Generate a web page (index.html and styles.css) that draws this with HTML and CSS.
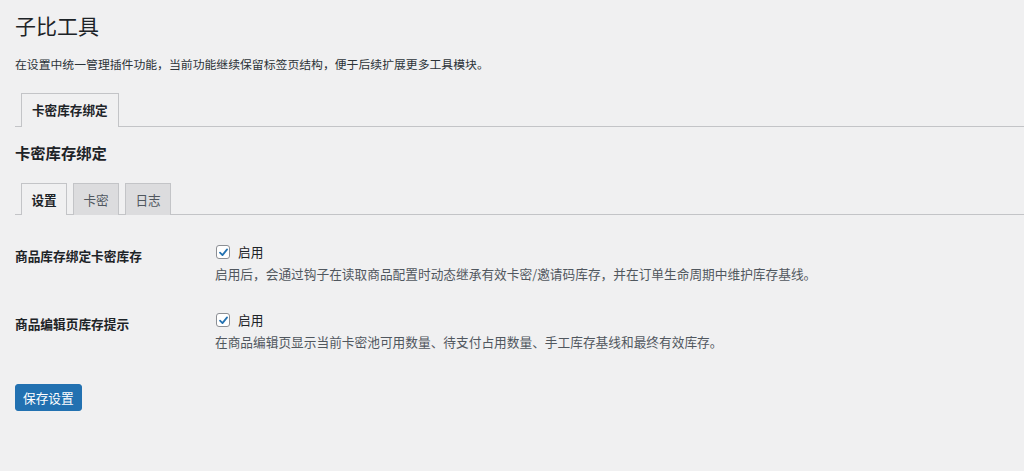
FILE: index.html
```html
<!DOCTYPE html>
<html lang="zh-CN">
<head>
<meta charset="utf-8">
<title>子比工具</title>
<link rel="stylesheet" href="styles.css">
</head>
<body>
<div class="wrap">
  <h1 class="page-title">子比工具</h1>
  <p class="page-desc">在设置中统一管理插件功能，当前功能继续保留标签页结构，便于后续扩展更多工具模块。</p>

  <nav class="nav-tabs">
    <a class="nav-tab nav-tab-active">卡密库存绑定</a>
  </nav>

  <h2 class="section-title">卡密库存绑定</h2>

  <nav class="nav-tabs sub-tabs">
    <a class="nav-tab nav-tab-active">设置</a>
    <a class="nav-tab">卡密</a>
    <a class="nav-tab">日志</a>
  </nav>

  <div class="form-table">
    <div class="form-row">
      <div class="form-label">商品库存绑定卡密库存</div>
      <div class="form-field">
        <label class="check-line">
          <span class="checkbox"><svg viewBox="0 0 12 12" width="11" height="11"><path d="M2.2 6.2 L4.9 8.9 L9.9 2.6" fill="none" stroke="#2271b1" stroke-width="1.9" stroke-linecap="round" stroke-linejoin="round"/></svg></span>
          <span>启用</span>
        </label>
        <p class="field-desc">启用后，会通过钩子在读取商品配置时动态继承有效卡密/邀请码库存，并在订单生命周期中维护库存基线。</p>
      </div>
    </div>
    <div class="form-row">
      <div class="form-label">商品编辑页库存提示</div>
      <div class="form-field">
        <label class="check-line">
          <span class="checkbox"><svg viewBox="0 0 12 12" width="11" height="11"><path d="M2.2 6.2 L4.9 8.9 L9.9 2.6" fill="none" stroke="#2271b1" stroke-width="1.9" stroke-linecap="round" stroke-linejoin="round"/></svg></span>
          <span>启用</span>
        </label>
        <p class="field-desc">在商品编辑页显示当前卡密池可用数量、待支付占用数量、手工库存基线和最终有效库存。</p>
      </div>
    </div>
  </div>

  <div class="submit-row">
    <button class="button-primary" type="button">保存设置</button>
  </div>
</div>
</body>
</html>
```

FILE: styles.css
```css
html, body {
  margin: 0;
  padding: 0;
  background: #f0f0f1;
}

body {
  font-family: "Noto Sans CJK SC", "Noto Sans", "Liberation Sans", sans-serif;
  color: #1d2327;
  font-size: 12.7px;
}

.wrap {
  padding: 12px 0 40px 15px;
}

.page-title {
  margin: 0;
  font-size: 21px;
  font-weight: 400;
  line-height: 27px;
  color: #1d2327;
}

.page-desc {
  margin: 16px 0 0;
  font-size: 11.85px;
  line-height: 18px;
  color: #2c3338;
}

.nav-tabs {
  display: flex;
  gap: 6px;
  margin-top: 20px;
  padding-left: 6px;
  border-bottom: 1px solid #c3c4c7;
}

.nav-tab {
  display: block;
  padding: 0 10px;
  height: 32px;
  line-height: 32px;
  font-size: 12.6px;
  border: 1px solid #c3c4c7;
  border-bottom: none;
  background: #dcdcde;
  color: #50575e;
  margin-bottom: -1px;
  padding-bottom: 1px;
}

.nav-tab-active {
  background: #f0f0f1;
  color: #1d2327;
  font-weight: 700;
}

.section-title {
  margin: 15px 0 0;
  font-size: 15.3px;
  line-height: 20px;
  font-weight: 700;
  color: #1d2327;
}

.sub-tabs {
  margin-top: 21px;
}

.sub-tabs .nav-tab {
  height: 31px;
  line-height: 31px;
  width: 44px;
  padding: 0;
  text-align: center;
}

.form-table {
  margin-top: 14px;
}

.form-row {
  display: flex;
  padding: 13px 0;
}

.form-label {
  width: 200px;
  flex: none;
  padding-top: 4px;
  font-weight: 700;
  font-size: 12.7px;
  line-height: 20px;
}

.form-field {
  flex: 1;
}

.check-line {
  display: flex;
  align-items: center;
  gap: 8px;
  height: 20px;
  line-height: 20px;
  font-size: 12.7px;
  padding-left: 1px;
}

.checkbox {
  width: 12px;
  height: 12px;
  border: 1px solid #8c8f94;
  border-radius: 3px;
  background: #fff;
  display: flex;
  align-items: center;
  justify-content: center;
}

.field-desc {
  margin: 2px 0 0;
  font-size: 12.7px;
  line-height: 20px;
  color: #50575e;
}

.submit-row {
  margin-top: 19px;
}

.button-primary {
  font-family: inherit;
  font-size: 12.7px;
  line-height: 25px;
  height: 27px;
  padding: 0 7px;
  border: 1px solid #2271b1;
  border-radius: 3px;
  background: #2271b1;
  color: #fff;
  cursor: pointer;
}
```
